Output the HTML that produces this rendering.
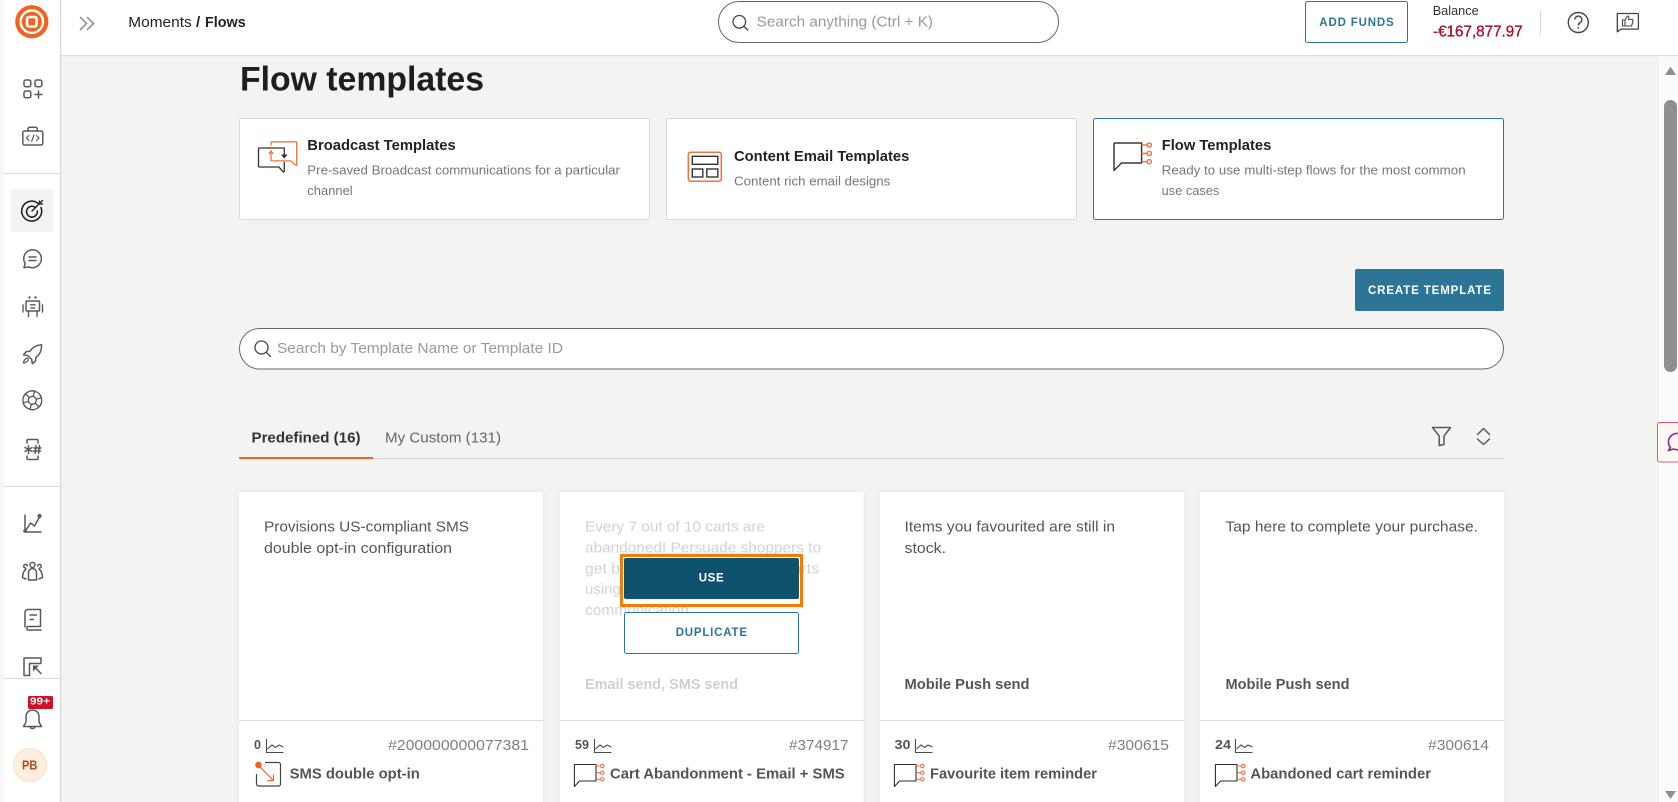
<!DOCTYPE html>
<html lang="en">
<head>
<meta charset="utf-8">
<title>Flow templates</title>
<style>
html,body{margin:0;padding:0;width:1678px;height:802px;overflow:hidden;background:#f3f3f2}
svg{display:block}
text{font-family:"Liberation Sans",sans-serif;white-space:pre}
.i{fill:none;stroke:#5a5a5a;stroke-width:1.5;stroke-linecap:round;stroke-linejoin:round}
.b{font-weight:700}
.ct{font-size:15px;font-weight:700;fill:#222}
.cd{font-size:12.5px;fill:#777}
.tx{font-size:15px;fill:#555}
.tf{font-size:15px;fill:#d2d2d2}
.sd{font-size:15px;font-weight:700;fill:#555}
.no{font-size:12.5px;font-weight:700;fill:#555}
.id{font-size:15px;fill:#808080}
.nm{font-size:15px;font-weight:700;fill:#555}
.card{fill:#fff;filter:drop-shadow(0 0 3px rgba(0,0,0,.07))}
</style>
</head>
<body>
<svg width="1678" height="802" viewBox="0 0 1678 802" xmlns="http://www.w3.org/2000/svg">
<defs>
<symbol id="flow" overflow="visible" width="32" height="25" viewBox="0 0 32 25">
  <path d="M22 .5H.9a.5.5 0 0 0-.5.5v21.500l5.200-5.500H22V.5z" fill="none" stroke="#2e2e2e" stroke-width="1.100" stroke-linejoin="round"/>
  <path d="M22 2h4.500M22 8.700h4.500M22 15.300h4.500" stroke="#f4703a" stroke-width="1.100"/>
  <circle cx="28.300" cy="2" r="1.700" fill="#fff" stroke="#f4703a" stroke-width="1.100"/>
  <circle cx="28.300" cy="8.700" r="1.700" fill="#fff" stroke="#f4703a" stroke-width="1.100"/>
  <circle cx="28.300" cy="15.300" r="1.700" fill="#fff" stroke="#f4703a" stroke-width="1.100"/>
</symbol>
<symbol id="spark" overflow="visible" width="18" height="14" viewBox="0 0 18 14">
  <path d="M.5 0v13.500h17" fill="none" stroke="#4a4a4a" stroke-width="1.100"/>
  <path d="M1.500 10l4.500-4 3.500 2.500 3.500-2.500 4.500 2" fill="none" stroke="#4a4a4a" stroke-width="1.100"/>
</symbol>
</defs>

<!-- main background -->
<rect width="1678" height="802" fill="#f3f3f2"/>

<!-- page title -->
<text x="240" y="90.500" font-size="34" class="b" fill="#1e1e1e" textLength="244" lengthAdjust="spacingAndGlyphs">Flow templates</text>

<!-- category cards -->
<rect x="239.500" y="118.500" width="410" height="101" rx="2" fill="#fff" stroke="#d9d9d9"/>
<rect x="666.500" y="118.500" width="410" height="101" rx="2" fill="#fff" stroke="#d9d9d9"/>
<rect x="1093.500" y="118.500" width="410" height="101" rx="2" fill="#fff" stroke="#2d7597"/>

<!-- broadcast icon -->
<path d="M284.300 162v9.500a.6.600 0 0 1-1 .4l-4.500-4.900H259.500a1 1 0 0 1-1-1V149a1 1 0 0 1 1-1h24.800v8" fill="none" stroke="#333" stroke-width="1.300" stroke-linejoin="round"/>
<path d="M271 145.500V142.800a1 1 0 0 1 1-1h23.700a1 1 0 0 1 1 1v22a.5.500 0 0 1-.8.400l-5.200-4.300H272a1 1 0 0 1-1-1V151.500" fill="none" stroke="#f4703a" stroke-width="1.300" stroke-linejoin="round"/>
<path d="M268.700 154l2.300-3 2.300 3" fill="none" stroke="#f4703a" stroke-width="1.300"/>
<path d="M282 155l2.300 2.800 2.300-2.800z" fill="#333" stroke="#333"/>

<text x="307.300" y="150" class="ct" textLength="148.400" lengthAdjust="spacingAndGlyphs">Broadcast Templates</text>
<text x="307.300" y="174.500" class="cd" textLength="312.700" lengthAdjust="spacingAndGlyphs">Pre-saved Broadcast communications for a particular</text>
<text x="307.300" y="195" class="cd" textLength="45.400" lengthAdjust="spacingAndGlyphs">channel</text>

<!-- content icon -->
<rect x="688.300" y="152.200" width="33" height="29" rx="2.500" fill="none" stroke="#f4703a" stroke-width="1.500"/>
<rect x="692.300" y="156.300" width="25.500" height="8" fill="none" stroke="#333" stroke-width="1.400"/>
<rect x="692.300" y="169" width="10.500" height="8" fill="none" stroke="#333" stroke-width="1.400"/>
<rect x="706.800" y="169" width="11" height="8" fill="none" stroke="#333" stroke-width="1.400"/>
<text x="734" y="161" class="ct" textLength="175.300" lengthAdjust="spacingAndGlyphs">Content Email Templates</text>
<text x="734" y="185.300" class="cd" textLength="156.300" lengthAdjust="spacingAndGlyphs">Content rich email designs</text>

<!-- flow icon -->
<path d="M1141.600 143H1115a1 1 0 0 0-1 1v26.500l7.500-7.500h20.100V143z" fill="none" stroke="#3a3a3a" stroke-width="1.500" stroke-linejoin="round"/>
<path d="M1141.600 145h5.500M1141.600 153.500h5.500M1141.600 161.700h5.500" stroke="#f4703a" stroke-width="1.400"/>
<circle cx="1149.300" cy="145" r="2.100" fill="#fff" stroke="#f4703a" stroke-width="1.400"/>
<circle cx="1149.300" cy="153.500" r="2.100" fill="#fff" stroke="#f4703a" stroke-width="1.400"/>
<circle cx="1149.300" cy="161.700" r="2.100" fill="#fff" stroke="#f4703a" stroke-width="1.400"/>
<text x="1161.700" y="150" class="ct" textLength="109.600" lengthAdjust="spacingAndGlyphs">Flow Templates</text>
<text x="1161.700" y="174.500" class="cd" textLength="304" lengthAdjust="spacingAndGlyphs">Ready to use multi-step flows for the most common</text>
<text x="1161.700" y="195" class="cd" textLength="57.600" lengthAdjust="spacingAndGlyphs">use cases</text>

<!-- create template -->
<rect x="1355" y="269" width="149" height="42" rx="2" fill="#2d7597"/>
<text x="1368" y="294" font-size="11.500" class="b" fill="#fff" textLength="123" lengthAdjust="spacing">CREATE TEMPLATE</text>

<!-- template search -->
<rect x="239.500" y="328.500" width="1264" height="40.500" rx="20.250" fill="#fff" stroke="#666"/>
<circle cx="261.500" cy="347.500" r="6.500" fill="none" stroke="#444" stroke-width="1.300"/>
<path d="M266.300 352.300l4.200 4.200" stroke="#444" stroke-width="1.300" stroke-linecap="round"/>
<text x="277" y="353" font-size="15" fill="#9a9a9a" textLength="286" lengthAdjust="spacingAndGlyphs">Search by Template Name or Template ID</text>

<!-- tabs -->
<text x="251.500" y="442.500" font-size="14.500" class="b" fill="#333" textLength="109" lengthAdjust="spacingAndGlyphs">Predefined (16)</text>
<text x="385" y="442.500" font-size="14.500" fill="#666" textLength="116" lengthAdjust="spacingAndGlyphs">My Custom (131)</text>
<rect x="239" y="458" width="1265" height="1" fill="#d4d4d4"/>
<rect x="239" y="457" width="134" height="2" fill="#f4621f"/>

<!-- funnel + sort -->
<path class="i" d="M1432.500 427.500h18l-6.500 8.500v8.500l-4.800 1v-9.500z"/>
<path class="i" d="M1477.500 434.500l6-6 6 6M1477.500 439l6 5.500 6-5.500"/>

<!-- template cards -->
<rect class="card" x="239" y="492" width="304" height="320"/>
<rect class="card" x="560" y="492" width="303.500" height="320"/>
<rect class="card" x="880" y="492" width="304" height="320"/>
<rect class="card" x="1200" y="492" width="304" height="320"/>
<g fill="#dcdcdc">
<rect x="239" y="720" width="304" height="1"/>
<rect x="560" y="720" width="303.500" height="1"/>
<rect x="880" y="720" width="304" height="1"/>
<rect x="1200" y="720" width="304" height="1"/>
</g>

<text x="264" y="531.500" class="tx" textLength="205" lengthAdjust="spacingAndGlyphs">Provisions US-compliant SMS</text>
<text x="264" y="553" class="tx" textLength="188" lengthAdjust="spacingAndGlyphs">double opt-in configuration</text>

<text x="585" y="531.500" class="tf" textLength="180" lengthAdjust="spacingAndGlyphs">Every 7 out of 10 carts are</text>
<text x="585" y="552.500" class="tf" textLength="236" lengthAdjust="spacingAndGlyphs">abandoned! Persuade shoppers to</text>
<text x="585" y="573.500" class="tf" textLength="234" lengthAdjust="spacingAndGlyphs">get back to their abandoned carts</text>
<text x="585" y="594" class="tf">using an SMS and Email</text>
<text x="585" y="615" class="tf" textLength="104" lengthAdjust="spacingAndGlyphs">communication</text>
<text x="585" y="689" class="sd" style="fill:#cfcfcf" textLength="153" lengthAdjust="spacingAndGlyphs">Email send, SMS send</text>

<text x="904.500" y="531.500" class="tx" textLength="210.500" lengthAdjust="spacingAndGlyphs">Items you favourited are still in</text>
<text x="904.500" y="553" class="tx" textLength="41.500" lengthAdjust="spacingAndGlyphs">stock.</text>
<text x="904.500" y="689" class="sd" textLength="125" lengthAdjust="spacingAndGlyphs">Mobile Push send</text>

<text x="1225.500" y="531.500" class="tx" textLength="252.500" lengthAdjust="spacingAndGlyphs">Tap here to complete your purchase.</text>
<text x="1225.500" y="689" class="sd" textLength="124" lengthAdjust="spacingAndGlyphs">Mobile Push send</text>

<!-- use/duplicate -->
<rect x="621.500" y="555.500" width="180" height="50" fill="none" stroke="#f57c00" stroke-width="3"/>
<rect x="624" y="558" width="175" height="41" rx="2" fill="#0f526e"/>
<text x="698.700" y="581.700" font-size="11.500" class="b" fill="#fff" textLength="25" lengthAdjust="spacing">USE</text>
<rect x="624.500" y="612.500" width="174" height="41" rx="2" fill="#fff" stroke="#2d7597"/>
<text x="675.700" y="636" font-size="11.500" class="b" fill="#2d7597" textLength="71.300" lengthAdjust="spacing">DUPLICATE</text>

<!-- footers -->
<text x="254" y="749" class="no" textLength="7" lengthAdjust="spacingAndGlyphs">0</text>
<use href="#spark" x="266" y="739"/>
<text x="388" y="750" class="id" textLength="141" lengthAdjust="spacingAndGlyphs">#200000000077381</text>
<path d="M265 762.500h13.500a2 2 0 0 1 2 2v19.500a2 2 0 0 1-2 2h-20a2 2 0 0 1-2-2v-10" fill="none" stroke="#444" stroke-width="1.200"/>
<circle cx="258.500" cy="765" r="3.300" fill="#f4621f"/>
<path d="M259 766l14.500 14.500M273.500 774.500v6h-6" fill="none" stroke="#f4621f" stroke-width="1.200"/>
<text x="289.600" y="778.700" class="nm" textLength="130.200" lengthAdjust="spacingAndGlyphs">SMS double opt-in</text>

<text x="575" y="749" class="no" textLength="14" lengthAdjust="spacingAndGlyphs">59</text>
<use href="#spark" x="594" y="739"/>
<text x="789" y="750" class="id" textLength="59.500" lengthAdjust="spacingAndGlyphs">#374917</text>
<use href="#flow" x="574" y="764"/>
<text x="610" y="778.700" class="nm" textLength="234.700" lengthAdjust="spacingAndGlyphs">Cart Abandonment - Email + SMS</text>

<text x="894.500" y="749" class="no" textLength="16" lengthAdjust="spacingAndGlyphs">30</text>
<use href="#spark" x="915" y="739"/>
<text x="1108" y="750" class="id" textLength="61" lengthAdjust="spacingAndGlyphs">#300615</text>
<use href="#flow" x="894" y="764"/>
<text x="930" y="778.700" class="nm" textLength="167" lengthAdjust="spacingAndGlyphs">Favourite item reminder</text>

<text x="1215" y="749" class="no" textLength="16" lengthAdjust="spacingAndGlyphs">24</text>
<use href="#spark" x="1235" y="739"/>
<text x="1428" y="750" class="id" textLength="61" lengthAdjust="spacingAndGlyphs">#300614</text>
<use href="#flow" x="1215" y="764"/>
<text x="1250.400" y="778.700" class="nm" textLength="180.600" lengthAdjust="spacingAndGlyphs">Abandoned cart reminder</text>

<!-- scrollbar -->
<rect x="1659" y="56" width="19" height="746" fill="#fbfbfb"/>
<path d="M1665 75l5.500-8.500 5.500 8.500z" fill="#8f8f8f"/>
<rect x="1664" y="100" width="13" height="272" rx="6.500" fill="#8f8f8f"/>
<path d="M1665 791l5.500 8 5.500-8z" fill="#8f8f8f"/>

<!-- feedback side tab -->
<rect x="1657.500" y="422.500" width="24" height="39.500" rx="2" fill="#fff8f2" stroke="#e0577a"/>
<path d="M1678 433.500a8.500 8.500 0 0 0-9.500 8.500c0 2.500 1 4.500 2 5.500l-2 3 5-1.500c1.500.5 3 .8 4.500.8" fill="none" stroke="#8d2a8f" stroke-width="1.600" stroke-linejoin="round"/>

<!-- top bar -->
<rect x="60" y="0" width="1618" height="55" fill="#fff"/>
<rect x="60" y="55" width="1618" height="1.200" fill="#dcdcdc"/>
<path d="M80 17l6.500 6.500-6.500 6.500M87 17l6.500 6.500-6.500 6.500" fill="none" stroke="#8a8a8a" stroke-width="1.500"/>
<text x="128.300" y="27" font-size="15" fill="#222" textLength="63.400" lengthAdjust="spacingAndGlyphs">Moments</text>
<text x="196" y="27" font-size="15" class="b" fill="#222">/</text>
<text x="205" y="27" font-size="15" class="b" fill="#222" textLength="40.700" lengthAdjust="spacingAndGlyphs">Flows</text>

<rect x="718.500" y="1.500" width="340" height="41" rx="20.500" fill="#fff" stroke="#666"/>
<circle cx="739.300" cy="21.800" r="6.300" fill="none" stroke="#444" stroke-width="1.300"/>
<path d="M744 26.500l3.800 3.500" stroke="#444" stroke-width="1.300" stroke-linecap="round"/>
<text x="756.700" y="26.700" font-size="15" fill="#9a9a9a" textLength="176.300" lengthAdjust="spacingAndGlyphs">Search anything (Ctrl + K)</text>

<rect x="1305.500" y="1.500" width="102" height="41" rx="2" fill="#fff" stroke="#2d7597"/>
<text x="1319.300" y="26" font-size="11.500" class="b" fill="#2d7597" textLength="74.400" lengthAdjust="spacing">ADD FUNDS</text>
<text x="1432.700" y="15" font-size="13" fill="#333" textLength="46" lengthAdjust="spacingAndGlyphs">Balance</text>
<text x="1433" y="36.700" font-size="15.500" fill="#a9122c" stroke="#a9122c" stroke-width=".35" textLength="89.700" lengthAdjust="spacingAndGlyphs">-€167,877.97</text>
<rect x="1540" y="10" width="1" height="25" fill="#d8d8d8"/>
<circle cx="1578.300" cy="22.500" r="10" fill="none" stroke="#444" stroke-width="1.400"/>
<path d="M1574.800 19.500a3.500 3.500 0 1 1 5.500 3c-1.300.8-2 1.500-2 3" fill="none" stroke="#444" stroke-width="1.400"/>
<circle cx="1578.300" cy="28" r=".9" fill="#444"/>
<path d="M1617.300 13.500h20.500a.6.600 0 0 1 .6.600v14.400a.6.600 0 0 1-.6.600h-17l-3.500 2.700z" fill="none" stroke="#444" stroke-width="1.300" stroke-linejoin="round"/>
<path d="M1622.500 20h2.500v6h-2.500zM1625 20l2.500-4c1.200 0 1.500 1 1.300 1.800l-.3 1.700h3.500c.8 0 1.200.7 1 1.400l-1 3.800c-.2.700-.6 1.300-1.300 1.300H1625" fill="none" stroke="#444" stroke-width="1.100" stroke-linejoin="round"/>

<!-- sidebar -->
<rect x="0" y="0" width="4" height="802" fill="#f6f6f6"/>
<rect x="4" y="0" width="56" height="802" fill="#fff"/>
<rect x="60" y="0" width="1.200" height="802" fill="#d6d6d6"/>
<g fill="#dadada">
<rect x="4" y="173" width="56" height="1"/>
<rect x="4" y="486" width="56" height="1"/>
<rect x="4" y="678" width="56" height="1"/>
</g>

<!-- logo -->
<circle cx="31.800" cy="21.700" r="16.600" fill="#f4621f"/>
<circle cx="31.800" cy="21.700" r="11.200" fill="none" stroke="#fff" stroke-width="2.400"/>
<rect x="25.800" y="15.700" width="12" height="12" rx="3" fill="#fff"/>
<rect x="28.300" y="18.200" width="7" height="7" rx="1.500" fill="#f4621f"/>

<!-- grid plus -->
<g class="i">
<rect x="24" y="80" width="6.800" height="6.800" rx="1.800"/>
<rect x="35" y="80" width="6.800" height="6.800" rx="1.800"/>
<rect x="24" y="91" width="6.800" height="6.800" rx="1.800"/>
<path d="M38.500 91v7M35 94.500h7"/>
</g>
<!-- briefcase code -->
<g class="i">
<path d="M28 131v-2.200a1.600 1.600 0 0 1 1.600-1.600h6a1.600 1.600 0 0 1 1.600 1.600v2.200"/>
<rect x="22.800" y="131" width="20" height="14" rx="1.600"/>
<path d="M29 135.500l-2.500 2.500 2.500 2.500M36.500 135.500l2.500 2.500-2.500 2.500M34 135l-2.300 6.200" stroke-width="1.200"/>
</g>

<!-- active target -->
<rect x="11" y="189" width="42" height="43" rx="2" fill="#f3f3f2"/>
<g fill="none" stroke="#1c1c1c" stroke-width="1.500" stroke-linecap="round">
<path d="M38.500 203.800A10 10 0 1 0 41 207.500"/>
<path d="M35.500 207.600A5.400 5.400 0 1 0 37.300 211"/>
<path d="M32 211l10.500-10.500M39.500 201v3h3" stroke-width="1.300"/>
</g>

<!-- chat -->
<g class="i">
<path d="M32.500 249.700a9 9 0 1 1-3.600 17.300l-5 .6 1.300-4A9 9 0 0 1 32.500 249.700z"/>
<path d="M29 257h7M29 260.500h7" stroke-width="1.400"/>
</g>

<!-- robot -->
<g class="i">
<rect x="26" y="301" width="13.500" height="10" rx="1"/>
<path d="M23 305v7M42.500 305v7M28.500 311v5.500M37 311v5.500M30.500 304.800h4.500M31 308h3.500" stroke-width="1.400"/>
</g>
<circle cx="29.500" cy="297.500" r="1.200" fill="#5a5a5a"/>
<circle cx="35.500" cy="297.500" r="1.200" fill="#5a5a5a"/>

<!-- rocket -->
<g class="i">
<path d="M41.500 344.800c-5 .3-9 2.800-11.800 6.500l-3.600.5-2.600 3 4.300.8 3.800 3.800.8 4.300 3-2.600.5-3.700c3.800-2.800 5.900-7.300 5.600-12.600z"/>
<path d="M27.500 358c-2 .6-3.600 2.300-4 5 2.700-.3 4.400-2 5-4" stroke-width="1.300"/>
</g>

<!-- swirl -->
<g transform="translate(32.300 400.300)" fill="none" stroke="#5a5a5a" stroke-width="1.300" stroke-linecap="round">
<circle r="4"/>
<g id="pet"><path d="M-2-9.300C3-10.200 8-7 9.100-2.500L3.900-1.200"/></g>
<path transform="rotate(60)" d="M-2-9.300C3-10.200 8-7 9.100-2.500L3.900-1.200"/>
<path transform="rotate(120)" d="M-2-9.300C3-10.200 8-7 9.100-2.500L3.900-1.200"/>
<path transform="rotate(180)" d="M-2-9.300C3-10.200 8-7 9.100-2.500L3.900-1.200"/>
<path transform="rotate(240)" d="M-2-9.300C3-10.200 8-7 9.100-2.500L3.900-1.200"/>
<path transform="rotate(300)" d="M-2-9.300C3-10.200 8-7 9.100-2.500L3.900-1.200"/>
</g>

<!-- *# -->
<g class="i" stroke-width="1.200">
<path d="M27 443v-2.500a1 1 0 0 1 1-1h9a1 1 0 0 1 1 1V443M27 456v2.500a1 1 0 0 0 1 1h9a1 1 0 0 0 1-1V456"/>
<path d="M28.500 445.500v8M25 447.500l7 4M25 451.500l7-4"/>
<path d="M36 445.500l-.9 8M39.500 445.500l-.9 8M33.800 448h7M33.500 451h7"/>
</g>

<!-- chart -->
<g class="i">
<path d="M25 515v17h16"/>
<path d="M25.500 531l5-8 4 3 4.500-8"/>
</g>
<circle cx="39.500" cy="516" r="2.100" fill="#5a5a5a"/>
<circle cx="25" cy="531" r="1.800" fill="#5a5a5a"/>

<!-- people -->
<g class="i" stroke-width="1.400">
<circle cx="32.500" cy="565" r="2.500"/>
<path d="M28.500 580v-7.500a4 4 0 0 1 8 0V580z"/>
<path d="M25.500 568a1.800 1.800 0 1 1 1.800-2M39.500 568a1.800 1.800 0 1 0-1.800-2M26 569c-1.800 1.500-3.500 4-3.500 8.500l3.500 1.500M39 569c1.800 1.500 3.500 4 3.500 8.500L39 579"/>
</g>

<!-- book -->
<g class="i">
<path d="M27.500 609.500h13v17H27.500a2.800 2.800 0 0 0 0 3.500H41M25 627v-14.500a3 3 0 0 1 2.500-3"/>
<path d="M30 615h6.500M30 619.500h3.500" stroke-width="1.400"/>
</g>

<!-- last icon -->
<g class="i" stroke-width="1.700" stroke-linecap="square" stroke-linejoin="miter">
<path d="M24 675.500V658h17v5.500H29.500v12z"/>
<path d="M35 667.500l6 6"/>
</g>
<path d="M33 665.500h6l-6 6z" fill="#5a5a5a"/>

<!-- bell -->
<g class="i" stroke-width="1.400">
<path d="M32.500 710a6.500 6.500 0 0 0-6.500 6.500v5.500l-2.500 4.500h18l-2.500-4.500v-5.500a6.500 6.500 0 0 0-6.500-6.500z"/>
<path d="M30 726.700a2.600 2.600 0 0 0 5 0"/>
</g>
<rect x="28" y="696" width="25" height="13" rx="1.500" fill="#d0112b"/>
<text x="30" y="704.700" font-size="10" class="b" fill="#fff" textLength="20" lengthAdjust="spacingAndGlyphs">99+</text>

<!-- avatar -->
<circle cx="30" cy="765" r="16.500" fill="#fdeee0" stroke="#fbdfc9"/>
<text x="22" y="769.500" font-size="13" class="b" fill="#b5461c" textLength="15.300" lengthAdjust="spacingAndGlyphs">PB</text>
</svg>
</body>
</html>
